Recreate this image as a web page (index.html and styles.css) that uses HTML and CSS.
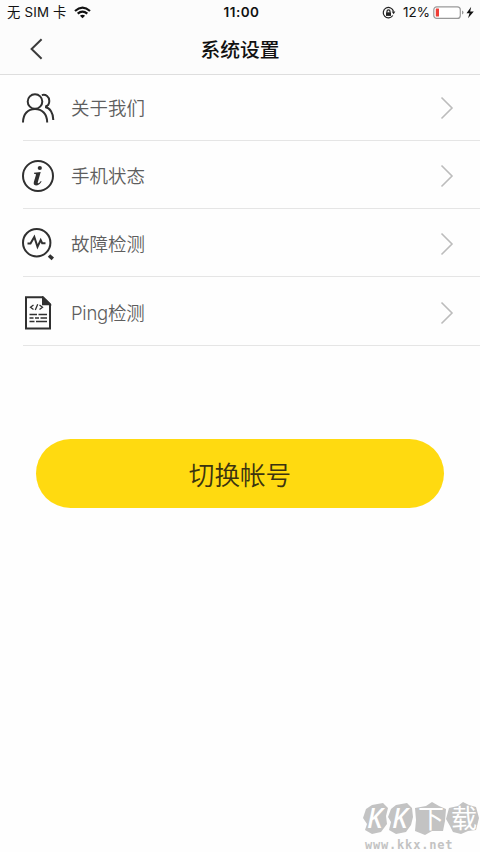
FILE: index.html
```html
<!DOCTYPE html>
<html lang="zh-CN">
<head>
<meta charset="utf-8">
<title>系统设置</title>
<link rel="stylesheet" href="styles.css">
</head>
<body>
<header class="header">
  <div class="status">
    <div class="status-left">
      <span class="carrier">无 SIM 卡</span>
      <svg class="wifi" width="17" height="13" viewBox="0 0 17 13" fill="none" stroke="#111" stroke-width="2.2">
        <path d="M1 5Q8.500-1.600 16 5M3.700 7.700Q8.500 3.500 13.300 7.700"/><path d="M5.900 9.800Q8.500 7.600 11.100 9.800L8.500 12.300Z" fill="#111" stroke="none"/>
      </svg>
    </div>
    <time class="clock">11:00</time>
    <div class="status-right">
      <svg width="14" height="14" viewBox="0 0 14 14" fill="none" stroke="#222" stroke-width="1.200">
        <path d="M10.800 9.500A5.200 5.200 0 1 1 11.500 5.500"/><path d="M9.700 5.500h3.600L11.600 8.300Z" fill="#222" stroke="none"/><path d="M4 6.300h5v3.600H4z" fill="#222" stroke="none"/><path d="M5 6.500V5.300a1.500 1.500 0 0 1 3 0v1.200"/>
      </svg>
      <span class="percent">12%</span>
      <svg class="battery" width="42" height="14" viewBox="0 0 42 14">
        <rect x=".8" y=".8" width="26.500" height="11.600" rx="3" fill="#fff" stroke="#999" stroke-width="1.200"/>
        <rect x="2.800" y="2.600" width="3.200" height="8" rx=".5" fill="#ef3e36"/>
        <path d="M29 4.500v4q1.500-.5 1.500-2T29 4.500" fill="#999"/>
        <path d="M38.200 .8 33.500 7.200h3L35 12.300l5.800-6.900h-3.600z" fill="#111"/>
      </svg>
    </div>
  </div>
  <nav class="nav">
    <svg class="back" width="14" height="22" viewBox="0 0 14 22" fill="none" stroke="#3b3b3b" stroke-width="2"><path d="M11.600 1.200 1.600 11 11.600 20.800"/></svg>
    <h1 class="title">系统设置</h1>
  </nav>
</header>
<main>
  <ul class="list">
    <li class="row">
      <svg class="icon" viewBox="0 0 34 34" fill="none" stroke="#303030" stroke-width="2">
        <circle cx="14" cy="10.500" r="7.300"/><path d="M2 31.500C2 23 7 17.900 14 17.900S26.200 23 26.200 31.500M20.800 4.100C24.800 3 28.300 5.700 28.300 9.900c0 3-1.700 5.100-4.200 5.700M24.100 16.100C29 17 32.300 22 32.300 29"/>
      </svg>
      <span class="label">关于我们</span>
      <svg class="arrow" viewBox="0 0 14 24"><path d="M1.500 1.500 12 12 1.500 22.500"/></svg>
    </li>
    <li class="row">
      <svg class="icon" viewBox="0 0 34 34">
        <circle cx="17" cy="17" r="15" fill="none" stroke="#303030" stroke-width="2"/>
        <circle cx="18.800" cy="9" r="2.100" fill="#303030"/>
        <path d="M13 13.800 19.700 12.900 16.800 23.300Q16.400 24.800 17.600 24.200 18.700 23.500 19.800 21.900L20.600 22.400Q18.200 26.400 15 26.400 12 26.300 12.900 22.800L15 15.700Q15.200 14.700 13 14.700Z" fill="#303030"/>
      </svg>
      <span class="label">手机状态</span>
      <svg class="arrow" viewBox="0 0 14 24"><path d="M1.500 1.500 12 12 1.500 22.500"/></svg>
    </li>
    <li class="row">
      <svg class="icon" viewBox="0 0 34 34" fill="none" stroke="#303030" stroke-width="2">
        <circle cx="15.700" cy="15.700" r="13.700"/><path d="M6.500 16.500H9.500L13.300 10 16.500 19.800 19.700 13 21.200 16.200H24.500"/><path d="M28 28.500 31.800 31.900" stroke-width="3.600"/>
      </svg>
      <span class="label">故障检测</span>
      <svg class="arrow" viewBox="0 0 14 24"><path d="M1.500 1.500 12 12 1.500 22.500"/></svg>
    </li>
    <li class="row">
      <svg class="icon" viewBox="0 0 34 34" fill="none" stroke="#303030" stroke-width="2">
        <path d="M5 1.200H22L29 8.200V32.500H5Z"/><path d="M22 2V8.200H28.500Z" fill="#303030"/>
        <path d="M12.500 9 9.500 11.200 12.500 13.400M18.500 9 21.500 11.200 18.500 13.400M16.700 8.300 14.300 14" stroke-width="1.300"/>
        <path d="M8.500 18.500H16M17.500 18.500H26M8.500 22H12.500M14 22H18M19.500 22H26M8.500 25.500H13.500M15 25.500H26" stroke-width="1.700"/>
      </svg>
      <span class="label latin">Ping检测</span>
      <svg class="arrow" viewBox="0 0 14 24"><path d="M1.500 1.500 12 12 1.500 22.500"/></svg>
    </li>
  </ul>
  <button class="switch" type="button">切换帐号</button>
</main>
<footer class="mark">
  <svg class="mark-art" width="118" height="40" viewBox="0 -4 118 40">
    <g fill="#c3c3c3">
      <path d="M4 7 10 3 21 1 26 6 24 14 25 22 19 30 10 32 3 28 5 22 1 16Z"/>
      <path d="M29 7 34 3 45 1 50 6 51 15 49 23 44 30 34 32 27 28 29 20 26 15Z"/>
      <path d="M53 6 64 4 70 0 77 4 84 7 83 19 81 29 70 29 63 33 53 29 54 18Z"/>
      <path d="M87 6 96 4 101 0 107 3 114 5 117 16 114 28 106 29 99 32 91 30 88 24 84 17Z"/>
    </g>
    <g class="mark-name"><text x="5" y="26">K</text><text x="30" y="26">K</text><text x="56" y="26" class="han">下</text><text x="89" y="26" class="han">载</text></g>
  </svg>
  <span class="mark-url">www.kkx.net</span>
</footer>
</body>
</html>
```

FILE: styles.css
```css
* { box-sizing: border-box; }
body {
  margin: 0;
  height: 852px;
  display: flex;
  flex-direction: column;
  overflow: hidden;
  background: #fefefe;
  font-family: Inter, "Noto Sans CJK SC", sans-serif;
}
.header {
  height: 75px;
  background: #fcfcfc;
  border-bottom: 1px solid #dedede;
}
.status {
  height: 25px;
  padding: 0 5px 0 7px;
  display: grid;
  grid-template-columns: 1fr auto 1fr;
  align-items: center;
  color: #111;
  font-size: 13px;
  line-height: 25px;
}
.status-left, .status-right { display: flex; align-items: center; white-space: nowrap; }
.status-left { gap: 7px; }
.carrier { font-size: 13.3px; letter-spacing: .2px; }
.status-right { justify-content: flex-end; }
.clock { padding-left: 1px; font-weight: 600; font-size: 13.5px; letter-spacing: .5px; }
.percent { margin: 0 3px 0 7px; font-size: 13.5px; }
.nav {
  height: 47px;
  padding: 0 30px;
  display: grid;
  grid-template-columns: 1fr auto 1fr;
  align-items: center;
}
.title {
  margin: 0;
  padding-top: 2px;
  color: #111;
  font-size: 19.8px;
  font-weight: 500;
  line-height: 30px;
}
.list { margin: 0; padding: 0; list-style: none; }
.row {
  height: 68.4px;
  margin-left: 23px;
  padding: 3px 26px 0 0;
  display: flex;
  align-items: center;
  border-bottom: 1px solid #e5e5e5;
}
.row:first-child { height: 65.6px; padding-top: 1px; }
.icon { width: 34px; height: 34px; margin-left: -2px; }
.label {
  flex: 1;
  margin-left: 16px;
  color: #5e5e5e;
  font-family: Inter, "Noto Sans CJK SC DemiLight", "Noto Sans CJK SC", sans-serif;
  font-size: 18.5px;
  font-weight: 350;
  line-height: 28px;
}
.latin { letter-spacing: -.25px; }
.arrow { width: 14px; height: 24px; fill: none; stroke: #bcbcbc; stroke-width: 1.6; }
.switch {
  display: block;
  width: 408px;
  height: 69px;
  margin: 93px auto 0;
  padding: 0;
  border: 0;
  border-radius: 35px;
  background: #ffda10;
  color: #3b3310;
  font: 350 25.6px/67px "Noto Sans CJK SC DemiLight", "Noto Sans CJK SC", sans-serif;
}
.mark {
  width: 118px;
  margin: auto 0 0 auto;
  display: flex;
  flex-direction: column;
}
.mark-art { overflow: visible; }
.mark-name { fill: #fff; font: italic 500 27px "Noto Sans", sans-serif; }
.han { font: normal 400 26px "Noto Sans CJK SC", sans-serif; }
.mark-url {
  padding: 1px 0 0 3px;
  color: #c3c3c3;
  font: 700 12px/13px "DejaVu Sans Mono", monospace;
  letter-spacing: .8px;
}
```
